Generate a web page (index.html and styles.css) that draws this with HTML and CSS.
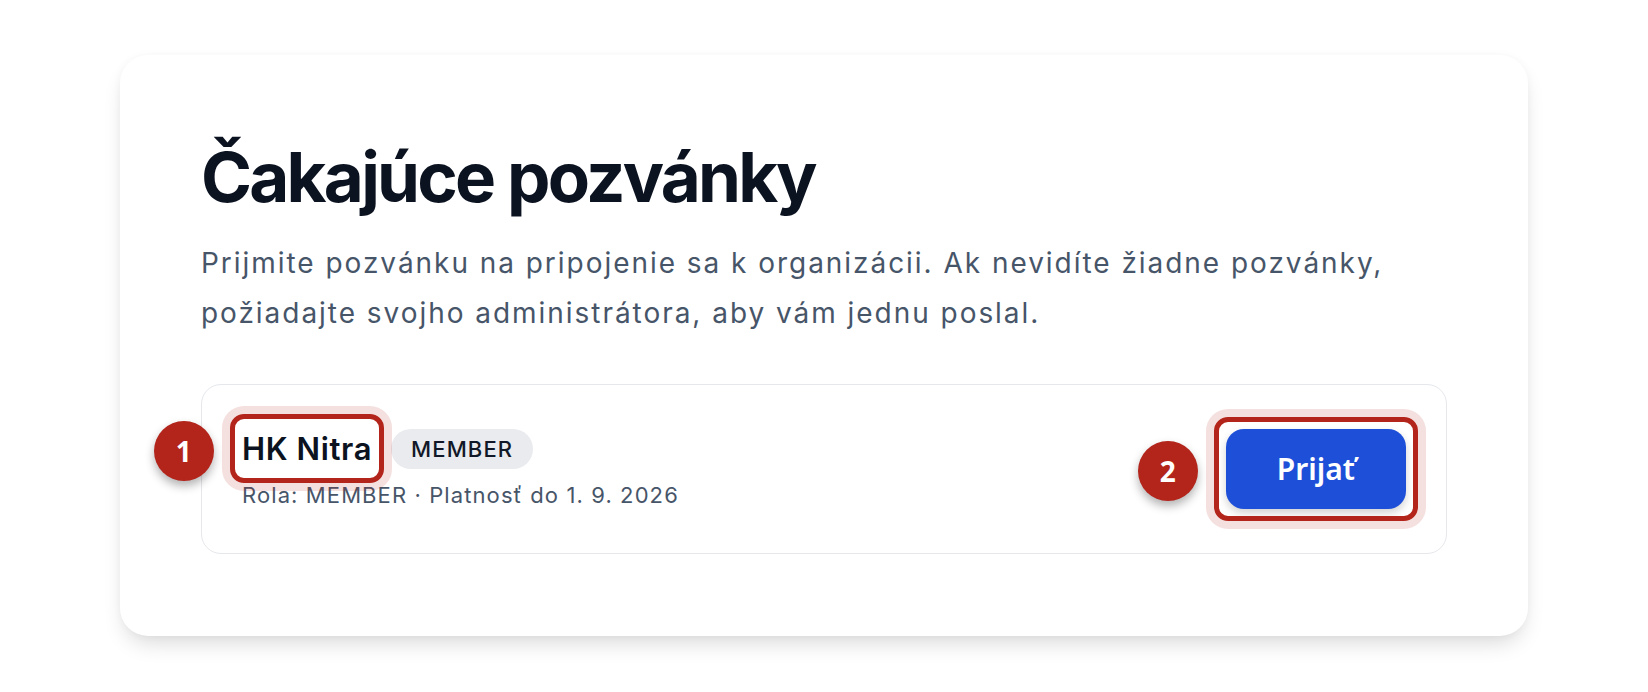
FILE: index.html
```html
<!DOCTYPE html>
<html lang="sk">
<head>
    <meta charset="UTF-8">
    <meta name="viewport" content="width=device-width, initial-scale=1">
    <title>Čakajúce pozvánky</title>
    <link rel="stylesheet" href="styles.css">
</head>
<body>

    <main class="page">
        <section class="panel">
            <h1>Čakajúce pozvánky</h1>
            <p class="lead">Prijmite pozvánku na pripojenie sa k organizácii. Ak nevidíte žiadne pozvánky, požiadajte svojho administrátora, aby vám jednu poslal.</p>

            <div class="invite">
                <div class="invite-info">
                    <div class="invite-head">
                        <span class="invite-name marked">
                            HK Nitra
                            <span class="mark"></span>
                            <span class="step">1</span>
                        </span>
                        <span class="role-badge">MEMBER</span>
                    </div>
                    <div class="invite-meta">Rola: MEMBER · Platnosť do 1. 9. 2026</div>
                </div>

                <span class="marked">
                    <button class="accept-button">Prijať</button>
                    <span class="mark"></span>
                    <span class="step">2</span>
                </span>
            </div>
        </section>
    </main>

</body>
</html>
```

FILE: styles.css
```css
body {
    margin: 0;
    background-color: #fff;
    font-family: Inter, "Noto Sans", sans-serif;
    color: #0b1220;
}
.page {
    padding: 55px 0 56px;
}
.panel {
    width: 1408px;
    box-sizing: border-box;
    margin: 0 auto;
    padding: 86px 81px 82px;
    background-color: #fff;
    border-radius: 28px;
    box-shadow: 0 12px 22px -6px rgba(0, 0, 0, 0.16), 0 0 10px rgba(0, 0, 0, 0.03);
}
h1 {
    margin: 0 0 25px;
    font-size: 69px;
    line-height: 72px;
    font-weight: 700;
    letter-spacing: -0.04em;
    color: #0b1220;
}
.lead {
    margin: 0 0 46px;
    font-size: 28px;
    line-height: 50px;
    letter-spacing: 0.07em;
    color: #475569;
}
.invite {
    display: flex;
    align-items: center;
    justify-content: space-between;
    padding: 41px 40px;
    border: 1px solid #e5e7eb;
    border-radius: 20px;
}
.invite-head {
    display: flex;
    align-items: center;
    gap: 19px;
}
.invite-name {
    font-size: 31px;
    line-height: 45px;
    font-weight: 600;
    letter-spacing: 0.02em;
    color: #0b1220;
}
.role-badge {
    padding: 0 20px;
    height: 40px;
    line-height: 40px;
    border-radius: 20px;
    background-color: #e9ebef;
    font-size: 22px;
    font-weight: 500;
    letter-spacing: 0.05em;
    color: #111827;
}
.invite-meta {
    margin-top: 8px;
    font-size: 22px;
    line-height: 33px;
    letter-spacing: 0.05em;
    color: #475569;
}
.accept-button {
    display: block;
    padding: 18px 51px;
    border: none;
    border-radius: 18px;
    background-color: #1d4fd8;
    color: #fff;
    font-family: "Noto Sans", sans-serif;
    font-size: 30px;
    line-height: 44px;
    font-weight: 600;
    box-shadow: 0 4px 8px rgba(0, 0, 0, 0.18);
    cursor: pointer;
}

/* annotation overlays */
.marked {
    position: relative;
    display: inline-block;
}
.mark {
    position: absolute;
    inset: -12px;
    border: 5px solid #b3241b;
    border-radius: 14px;
    box-shadow: 0 0 0 8px rgba(179, 36, 27, 0.14);
    pointer-events: none;
}
.step {
    position: absolute;
    top: 50%;
    right: calc(100% + 28px);
    width: 60px;
    height: 60px;
    margin-top: -28px;
    border-radius: 50%;
    background-color: #b3241b;
    color: #fff;
    font-family: "Noto Sans", sans-serif;
    font-size: 28px;
    font-weight: 700;
    line-height: 60px;
    text-align: center;
    box-shadow: 0 5px 10px rgba(0, 0, 0, 0.3);
}
```
